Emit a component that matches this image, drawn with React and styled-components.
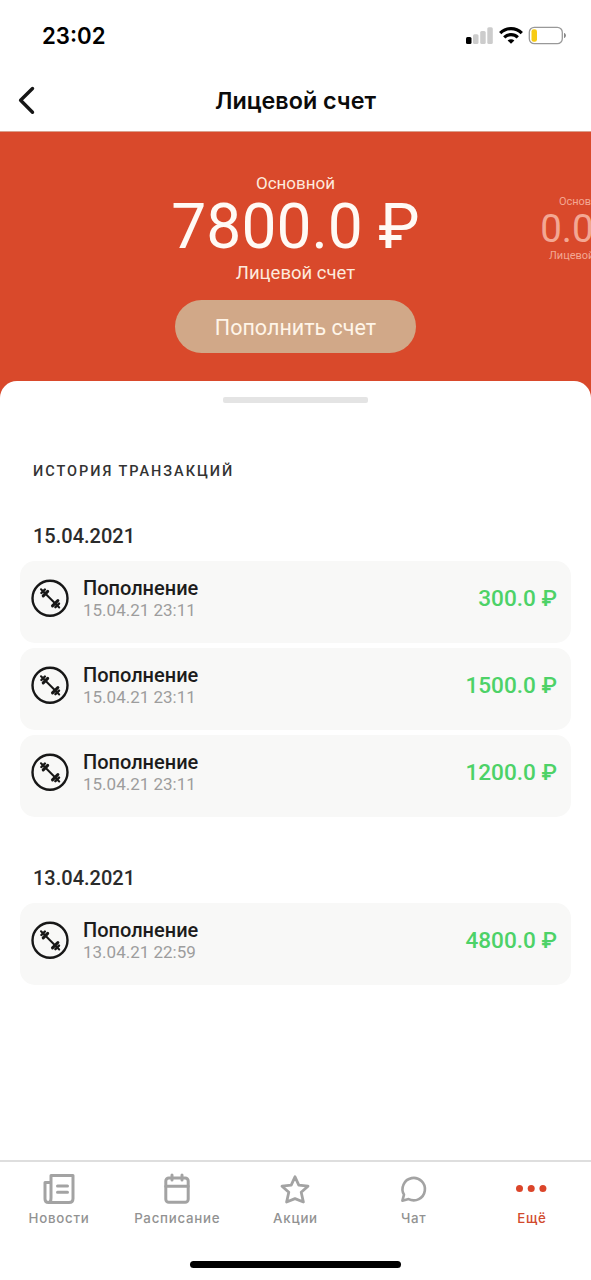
import React from 'react';
import styled, { createGlobalStyle } from 'styled-components';

const GlobalStyle = createGlobalStyle`
  * { box-sizing: border-box; }
  body { margin: 0; background: #fff; }
  button { border: 0; padding: 0; background: none; font: inherit; }
  svg { display: block; flex: none; }
`;

const Screen = styled.div`
  width: 591px;
  height: 1280px;
  display: flex;
  flex-direction: column;
  overflow: hidden;
  background: #fff;
  font-family: Roboto, sans-serif;
  white-space: nowrap;
`;

const StatusBar = styled.header`
  height: 70px;
  display: flex;
  justify-content: space-between;
  padding: 0 24px 0 42px;
`;

const Clock = styled.span`
  font: 600 22.2px/71px Inter, sans-serif;
  color: #000;
`;

const StatusIcons = styled.div`
  display: flex;
  align-items: flex-start;
  gap: 5px;
  padding-top: 26px;
`;

const NavBar = styled.nav`
  height: 61.5px;
  flex: none;
  display: grid;
  grid-template-columns: 60px 1fr 60px;
  border-bottom: 1px solid #d9a08c;
`;

const BackButton = styled.button`
  display: flex;
  padding: 16px 0 0 17px;
`;

const PageTitle = styled.h1`
  margin: 0;
  text-align: center;
  font: 600 23.3px/61px Inter, sans-serif;
  color: #0b0b0b;
`;

const Hero = styled.section`
  height: 266px;
  flex: none;
  display: grid;
  grid-template-columns: minmax(0, 1fr) 246px minmax(0, 1fr);
  background: #d9492b;
`;

const Account = styled.div`
  grid-column: 2;
  display: flex;
  flex-direction: column;
  align-items: center;
  padding-top: 40.5px;
`;

const AccountKind = styled.span`
  font-size: 17px;
  line-height: 22px;
  color: #fdeadd;
`;

const Balance = styled.strong`
  font-weight: 400;
  font-size: 62.3px;
  line-height: 66px;
  color: #fffaf5;
`;

const AccountName = styled.span`
  font-size: 18.5px;
  line-height: 27px;
  color: #fdeadd;
`;

const TopUp = styled.button`
  width: 241px;
  height: 53px;
  margin-top: 13px;
  border-radius: 27px;
  background: #d1a888;
  color: #fff5e8;
  font-size: 21.5px;
  line-height: 53px;
  padding-top: 1px;
`;

const NextAccount = styled.div`
  width: 100px;
  margin-left: 116px;
  padding-top: 62px;
  display: flex;
  flex-direction: column;
  align-items: center;
  color: #f3a793;
`;

const SmallText = styled.span`
  font-size: 11px;
  line-height: 16px;
`;

const SmallBalance = styled.span`
  font-size: 38.5px;
  line-height: 38px;
`;

const Sheet = styled.main`
  flex: 1;
  margin-top: -16.5px;
  padding: 16px 20px 0;
  border-radius: 17px 17px 0 0;
  background: #fff;
`;

const Handle = styled.div`
  width: 145px;
  height: 6px;
  margin: 0 auto;
  border-radius: 2px;
  background: #e4e4e4;
`;

const HistoryTitle = styled.h2`
  margin: 59px 13px 0;
  font-weight: 500;
  font-size: 14.5px;
  line-height: 20px;
  letter-spacing: 1.97px;
  text-transform: uppercase;
  color: #333;
`;

const Day = styled.section`
  margin-top: ${(p) => p.$gap}px;
`;

const DayTitle = styled.h3`
  margin: 0 13px 13px;
  font-weight: 500;
  font-size: 20px;
  line-height: 24px;
  color: #2b2b2b;
`;

const Cards = styled.div`
  display: grid;
  gap: 5.5px;
`;

const Card = styled.article`
  height: 81.5px;
  display: grid;
  grid-template-columns: 52px 1fr auto;
  padding: 0 14px 0 11px;
  border-radius: 15px;
  background: #f8f8f7;
`;

const CardIcon = styled.div`
  padding-top: 18px;
`;

const CardText = styled.div`
  display: flex;
  flex-direction: column;
  padding-top: 15px;
`;

const Operation = styled.span`
  font-weight: 500;
  font-size: 20px;
  line-height: 24px;
  color: #1c1c1c;
`;

const OperationTime = styled.span`
  font-size: 17px;
  line-height: 20px;
  color: #9d9d9d;
`;

const Amount = styled.span`
  padding-top: 24px;
  font-weight: 500;
  font-size: 22.6px;
  line-height: 28px;
  color: #4dd267;
`;

const TabBar = styled.footer`
  height: 120px;
  flex: none;
  display: flex;
  flex-direction: column;
  align-items: center;
  border-top: 2px solid #dedede;
`;

const Tabs = styled.div`
  width: 100%;
  height: 99px;
  display: grid;
  grid-template-columns: repeat(5, 1fr);
`;

const Tab = styled.button`
  display: flex;
  flex-direction: column;
  align-items: center;
  justify-content: flex-start;
  padding-top: 10px;
  font: 500 13.3px/18px Inter, sans-serif;
  letter-spacing: 0.75px;
  color: ${(p) => (p.$active ? '#d14a2d' : '#929292')};
  svg { margin-bottom: 3px; color: ${(p) => (p.$active ? '#db452a' : '#a3a3a3')}; }
`;

const HomeIndicator = styled.div`
  width: 211px;
  height: 7px;
  border-radius: 4px;
  background: #000;
`;

const Signal = () => (
  <svg width="28" height="19" viewBox="0 0 28 19">
    <rect x="0" y="11" width="5.5" height="7" rx="1.5" fill="#000" />
    <rect x="7" y="8.3" width="5.5" height="9.7" rx="1.5" fill="#ccc" />
    <rect x="14.2" y="5" width="5.5" height="13" rx="1.5" fill="#ccc" />
    <rect x="21.3" y="1.3" width="5.5" height="16.7" rx="1.5" fill="#ccc" />
  </svg>
);

const Wifi = () => (
  <svg width="24" height="19" viewBox="0 0 24 19" fill="none" stroke="#000" strokeWidth="3.2">
    <path d="M1.2 7.1C7.2 1.1 16.8 1.1 22.8 7.1" />
    <path d="M5.2 11.3C9 7.7 15 7.7 18.8 11.3" />
    <path d="M12 17.8L8.6 14.4C10.5 12.7 13.5 12.7 15.4 14.4Z" fill="#000" stroke="none" />
  </svg>
);

const Battery = () => (
  <svg width="39" height="19" viewBox="0 0 39 19">
    <rect x="1.3" y="1.3" width="33" height="16.4" rx="5" fill="none" stroke="#999" strokeWidth="1.3" />
    <rect x="3.5" y="3.3" width="5.5" height="12.4" rx="2.2" fill="#f7cb13" />
    <path d="M36 7v5c2.6-.6 2.6-4.4 0-5Z" fill="#888" />
  </svg>
);

const Dumbbell = () => (
  <svg width="38" height="38" viewBox="0 0 38 38" fill="none" stroke="#171717" strokeLinecap="round" strokeLinejoin="round">
    <circle cx="19" cy="19.2" r="17.5" strokeWidth="2.4" />
    <path d="M10 10.3L28.2 28.5" strokeWidth="2" />
    <path d="M12.2 16.9L16.7 12.4M21.5 26.9L26.9 21.5" strokeWidth="3" />
    <path d="M10.4 14L13.9 10.5M24.4 28.2L28 24.6" strokeWidth="2.4" />
  </svg>
);

const NewsIcon = () => (
  <svg width="32" height="34" viewBox="0 0 32 34" fill="none" stroke="currentColor" strokeWidth="3" strokeLinecap="round" strokeLinejoin="round">
    <path d="M8 26V3.5H30V26.5Q30 30.5 26 30.5H5.5Q2 30.5 2 27V10.5H8V26Q8 30.5 5.5 30.5" />
    <path d="M14.5 14H24.5M14.5 20.2H24.5" />
  </svg>
);

const CalendarIcon = () => (
  <svg width="32" height="34" viewBox="0 0 32 34" fill="none" stroke="currentColor" strokeWidth="3" strokeLinecap="round" strokeLinejoin="round">
    <rect x="4.8" y="6" width="22.4" height="24.3" rx="3" />
    <path d="M4.8 14.2H27.2M11 3V8M21 3V8" />
  </svg>
);

const StarIcon = () => (
  <svg width="32" height="34" viewBox="0 0 32 34" fill="none" stroke="currentColor" strokeWidth="2.8" strokeLinejoin="round">
    <path d="M16 4.8L19.8 13.1L29 14.2L22.2 20.3L24.4 30L16 26.6L7.6 30L9.8 20.3L3 14.2L12.2 13.1Z" />
  </svg>
);

const ChatIcon = () => (
  <svg width="32" height="34" viewBox="0 0 32 34" fill="none" stroke="currentColor" strokeWidth="2.6" strokeLinejoin="round">
    <path d="M4.4 28.7L6 22.7A11.2 11.2 0 1 1 10.6 27.1Z" />
  </svg>
);

const MoreIcon = () => (
  <svg width="32" height="34" viewBox="0 0 32 34" fill="currentColor">
    <circle cx="3.5" cy="16.6" r="3.5" />
    <circle cx="15.2" cy="16.6" r="3.5" />
    <circle cx="26.9" cy="16.6" r="3.5" />
  </svg>
);

const days = [
  {
    date: '15.04.2021',
    gap: 42,
    items: [
      { time: '15.04.21 23:11', amount: '300.0 ₽' },
      { time: '15.04.21 23:11', amount: '1500.0 ₽' },
      { time: '15.04.21 23:11', amount: '1200.0 ₽' },
    ],
  },
  { date: '13.04.2021', gap: 49.5, items: [{ time: '13.04.21 22:59', amount: '4800.0 ₽' }] },
];

const tabs = [
  { label: 'Новости', Icon: NewsIcon },
  { label: 'Расписание', Icon: CalendarIcon },
  { label: 'Акции', Icon: StarIcon },
  { label: 'Чат', Icon: ChatIcon },
  { label: 'Ещё', Icon: MoreIcon, active: true },
];

export default function App() {
  return (
    <Screen>
      <GlobalStyle />
      <StatusBar>
        <Clock>23:02</Clock>
        <StatusIcons>
          <Signal />
          <Wifi />
          <Battery />
        </StatusIcons>
      </StatusBar>
      <NavBar>
        <BackButton aria-label="Назад">
          <svg width="20" height="29" viewBox="0 0 20 29" fill="none" stroke="#161616" strokeWidth="3.4" strokeLinecap="round" strokeLinejoin="round">
            <path d="M15.5 2.5L3.6 14.3L15.5 26.2" />
          </svg>
        </BackButton>
        <PageTitle>Лицевой счет</PageTitle>
      </NavBar>
      <Hero>
        <Account>
          <AccountKind>Основной</AccountKind>
          <Balance>7800.0 ₽</Balance>
          <AccountName>Лицевой счет</AccountName>
          <TopUp>Пополнить счет</TopUp>
        </Account>
        <NextAccount>
          <SmallText>Основной</SmallText>
          <SmallBalance>0.0 ₽</SmallBalance>
          <SmallText>Лицевой счет</SmallText>
        </NextAccount>
      </Hero>
      <Sheet>
        <Handle />
        <HistoryTitle>История транзакций</HistoryTitle>
        {days.map((day) => (
          <Day key={day.date} $gap={day.gap}>
            <DayTitle>{day.date}</DayTitle>
            <Cards>
              {day.items.map((item, i) => (
                <Card key={i}>
                  <CardIcon><Dumbbell /></CardIcon>
                  <CardText>
                    <Operation>Пополнение</Operation>
                    <OperationTime>{item.time}</OperationTime>
                  </CardText>
                  <Amount>{item.amount}</Amount>
                </Card>
              ))}
            </Cards>
          </Day>
        ))}
      </Sheet>
      <TabBar>
        <Tabs>
          {tabs.map(({ label, Icon, active }) => (
            <Tab key={label} $active={active}>
              <Icon />
              {label}
            </Tab>
          ))}
        </Tabs>
        <HomeIndicator />
      </TabBar>
    </Screen>
  );
}
